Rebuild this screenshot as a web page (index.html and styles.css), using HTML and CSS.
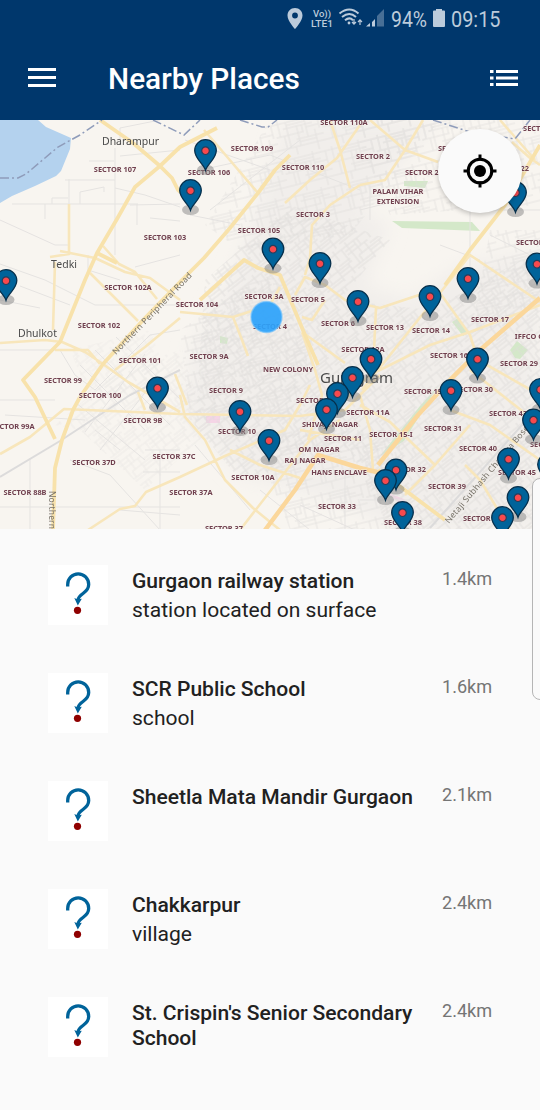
FILE: index.html
```html
<!DOCTYPE html>
<html lang="en">
<head>
<meta charset="utf-8">
<title>Nearby Places</title>
<link rel="stylesheet" href="styles.css">
</head>
<body>
<header class="header">
  <svg class="status" viewBox="0 0 540 38" aria-label="Status bar">
    <path fill-rule="evenodd" d="M295 8c-4.400 0-7.500 3.300-7.500 7.500 0 5.500 7.500 13.500 7.500 13.500s7.500-8 7.500-13.500c0-4.200-3.100-7.500-7.500-7.500zm0 4.600a2.900 2.900 0 1 1 0 5.800 2.900 2.900 0 0 1 0-5.800z"/>
    <text class="volte" x="313" y="17" textLength="18" lengthAdjust="spacingAndGlyphs">Vo))</text>
    <text class="volte" x="311" y="27" textLength="22" lengthAdjust="spacingAndGlyphs">LTE1</text>
    <g class="wave"><path d="M339.500 13.500q10-8 19 0M342 17q7.500-6 14 0M345 20.200q4.500-3.700 8 0"/><path d="M354 19v5m-2-2l2 2.200 2-2.200M360 25v-5m-2 2l2-2.200 2 2.200" stroke-width="1.200"/></g>
    <circle cx="349" cy="23" r="1.400"/>
    <path d="M366 26.500l4-3.500v3.500zM372 22l3-3v7.500h-3z"/><path opacity=".38" d="M377 16l7-7v17.500h-7z"/>
    <text class="digits" x="391" y="27" textLength="36" lengthAdjust="spacingAndGlyphs">94%</text>
    <path d="M433 11.500q0-1 1-1h2v-1.500h6v1.500h2q1 0 1 1v14.500q0 1-1 1h-10q-1 0-1-1z"/>
    <text class="digits" x="451" y="27" textLength="49.500" lengthAdjust="spacingAndGlyphs">09:15</text>
  </svg>
  <div class="toolbar">
    <svg class="menu" viewBox="0 0 28 20"><path d="M0 0h28v3H0zM0 8h28v3H0zM0 16h28v3H0z"/></svg>
    <h1 class="title">Nearby Places</h1>
    <svg class="listicon" viewBox="0 0 28 16"><path d="M0 0h3.500v3H0zM6 0h22v3H6zM0 6.500h3.500v3H0zM6 6.500h22v3H6zM0 13h3.500v3H0zM6 13h22v3H6z"/></svg>
  </div>
</header>

<main>
<section class="map">
<svg class="mapsvg" viewBox="0 120 540 410">
  <defs>
    <pattern id="blocks" width="39" height="31" patternUnits="userSpaceOnUse" patternTransform="rotate(-38)">
      <path d="M0 4h39M0 12h25M9 19h30M0 26h39M5 0v26M13 4v15M21 12v19M29 0v12M34 19v12M17 4v8M9 19v7M0 8h13M21 22h13M25 16h14M0 29h21M37 4v15"/>
    </pattern>
    <pattern id="grid" width="47" height="37" patternUnits="userSpaceOnUse" patternTransform="rotate(-14)">
      <path d="M0 3h47M8 9h30M0 16h28M19 22h28M0 29h47M4 0v16M12 3v26M22 9v20M31 0v22M39 16v21M44 3v13M17 29v8M12 6h19M22 25h17M31 12h13M8 16v13M27 9v7"/>
    </pattern>
    <filter id="soft" x="-10%" y="-10%" width="120%" height="120%"><feGaussianBlur stdDeviation="9"/></filter>
    <g id="pin">
      <ellipse class="shade" cx="0" cy="19" rx="8.500" ry="5.300"/>
      <path class="pinbody" d="M0 19.500C-2 13-10.800 8-10.800-.2a10.800 10.800 0 0 1 21.600 0C10.800 8 2 13 0 19.500z"/>
      <circle class="pindot" r="3.800"/>
    </g>
  </defs>
  <rect class="land" y="120" width="540" height="410"/>
  <path class="lake" d="M0 120H38L46 127 71 138 70 149 61 171 56 176 35 186 12 196 0 203z"/>
  <path class="urban" filter="url(#soft)" d="M285 120H438L360 210 390 225 365 285 410 300 460 265 540 250V530H400L330 500 240 475 185 415 190 350 235 270z"/>
  <path class="park" d="M392 221l80 1 8 9-78-3zM404 181h24l-3 7-21-2zM452 322l6-4 10 15-5 3zM510 350l7-9 11 9-8 9-5-1zM380 456l40-50 18-20-34 55zM220 336l8 2-1 6-7-1z"/>
  <path class="pink" d="M206 416h14v7h-14zM388 493l16 6 12 14-10-3z"/>
  <g fill="url(#grid)" opacity=".65">
    <path d="M270 120H440L350 235 240 250 205 225zM180 330L270 270 310 350 290 420 190 420z"/>
    <path d="M350 120H540V205L390 215zM490 230H540V300L470 340zM250 430H400V530H290z"/>
  </g>
  <g fill="url(#blocks)" opacity=".75">
    <path d="M205 280L290 205 390 240 340 300 430 310 540 250V530H390L350 450 240 480 195 425z"/>
    <path d="M55 425L120 370 180 350 210 430 145 490 80 430z" opacity=".5"/>
    <path d="M70 350L150 330 165 370 95 410z" opacity=".4"/>
  </g>
  <g class="lanes">
    <path d="M12 204H138M65 180H115V148M69 179V204M115 180V255M89 161H114M115 188L145 195 180 207M45 204V219M52 204V198H68M80 204V192L104 187V192M137 204V225M0 220L55 245H69M120 145V128L160 120M120 156L180 150M130 205L180 204M150 218L180 221M147 238H180M0 264L45 280 95 305H180M88 255V270L120 280M135 267L180 255M20 286L70 305M0 350H60L75 375 95 390 150 335 180 330M0 300L40 308M5 415L85 420M95 430L120 450M30 458V530M0 507H180M70 460L110 475 160 530M145 450H180M143 472H180M120 510L180 515M160 450V530M185 140L270 170M190 215L240 225M200 170L270 155 360 190M210 210L300 140M195 445L250 510M260 490L310 530M345 470V530M360 500H410M300 505L355 530M470 190V285M490 235L540 260M480 210H540M440 245L480 260M360 210L420 195M370 185V220M0 400H55M80 365L145 430M95 350L170 425M116 337L183 402M75 402L145 460M100 450L155 380M85 432L145 354"/>
  </g>
  <path class="rail" d="M0 477L60 441 130 395 180 370M540 405L430 528"/>
  <g class="road thin">
    <path d="M69 204V254L50 257M103 246L119 264 135 272 157 299M60 251L95 258 125 272 150 278 180 300M55 262L53 330M0 343L45 340 62 342 85 352 103 364 128 382 180 412M55 350H88L100 364M180 318L145 347 115 370M204 130L217 145 258 193M330 120L340 150 350 188M360 125L337 158 310 180 285 203M360 185L330 205 312 225 310 258 305 275M370 120L405 150 438 162M405 150L423 120M405 150L385 180 360 185M512 142L530 158 540 165M180 312L233 317 270 305 280 287M233 317L242 340 248 356M295 295L305 277 325 285 345 300 380 308 425 293 440 293 470 255 540 302M302 317L312 320 325 300M302 332L345 363M302 332L315 370 322 395 308 440M440 293L470 335 478 360 540 395M362 390L430 305M376 308L374 350M0 454L30 437 64 409 180 414 300 416 345 410 380 375M88 530L120 509 135 506 146 492 180 477 225 456 285 430 300 405 310 385M180 395L185 417 205 440 225 480 253 508 280 530M240 530L310 440 340 420M230 450L260 465 300 478M300 430L360 440M360 395L370 430 373 470M360 405L390 422 435 465 405 495M435 465L470 425M450 410L490 425 540 460M465 465L480 480 510 530M175 374L187 405M138 392L145 410M470 370L540 425M500 120L535 160M345 400L370 375 430 345 470 332 540 305M90 273L138 321"/>
  </g>
  <g class="road">
    <path d="M100 120L133 143 160 166 172 178 178 190 190 200M217 128L180 147 160 166 135 187 117 219 97 253 85 280 60 342 23 380 35 397 55 439M290 155L275 170 258 193 230 228 204 258 180 282 145 318 103 364 80 397 73 410 62 440 55 468 53 530M200 300L244 260 258 268 280 275 305 335 318 365M540 145L505 205 470 250 445 285M378 470L445 520M97 253L117 263"/>
  </g>
  <path class="highway" d="M540 298L480 350 450 380 418 415 378 465M385 474L360 468 318 455 295 490 265 530"/>
  <path class="border" d="M0 178H18L26 174 58 147 80 135 102 120M153 120L184 135 200 120M240 120L262 127 268 127 277 120M433 120L470 132 515 139 530 120"/>

  <g class="place">
    <text x="102" y="145" textLength="57">Dharampur</text><text x="51" y="268" textLength="26">Tedki</text><text x="18" y="337" textLength="39">Dhulkot</text>
    <text class="city" x="320" y="383" textLength="73">Gurugram</text>
  </g>
  <g class="street">
    <text transform="translate(116 355) rotate(-46)" textLength="110">Northern Peripheral Road</text>
    <text transform="translate(49 491) rotate(90)" textLength="38">Northern</text>
    <text transform="translate(449 524) rotate(-50)" textLength="125">Netaji Subhash Chandra Bose</text>
  </g>
  <g class="sector">
    <text x="344" y="125">SECTOR 110A</text><text x="252" y="151">SECTOR 109</text><text x="115" y="172">SECTOR 107</text><text x="209" y="175">SECTOR 106</text><text x="303" y="170">SECTOR 110</text><text x="373" y="159">SECTOR 2</text><text x="424" y="175">SECTOR 23</text><text x="457" y="151">SECTOR 21</text><text x="537" y="131">SECTOR</text><text x="510" y="171">SECTOR 22</text>
    <text x="398" y="194">PALAM VIHAR</text><text x="398" y="204">EXTENSION</text><text x="313" y="217">SECTOR 3</text><text x="259" y="233">SECTOR 105</text><text x="165" y="240">SECTOR 103</text><text x="535" y="245">SECTOR 18</text>
    <text x="128" y="290">SECTOR 102A</text><text x="99" y="328">SECTOR 102</text><text x="197" y="307">SECTOR 104</text><text x="264" y="299">SECTOR 3A</text><text x="308" y="302">SECTOR 5</text><text x="270" y="329">SECTOR 4</text><text x="338" y="326">SECTOR 6</text><text x="385" y="330">SECTOR 13</text><text x="431" y="333">SECTOR 14</text><text x="490" y="322">SECTOR 17</text><text x="539" y="339">IFFCO Chowk</text>
    <text x="140" y="363">SECTOR 101</text><text x="63" y="383">SECTOR 99</text><text x="100" y="398">SECTOR 100</text><text x="209" y="359">SECTOR 9A</text><text x="288" y="372">NEW COLONY</text><text x="363" y="352">SECTOR 12A</text><text x="449" y="358">SECTOR 16</text><text x="519" y="366">SECTOR 29</text><text x="226" y="393">SECTOR 9</text><text x="423" y="394">SECTOR 15</text><text x="474" y="392">SECTOR 30</text>
    <text x="13" y="429">SECTOR 99A</text><text x="143" y="423">SECTOR 9B</text><text x="237" y="434">SECTOR 10</text><text x="313" y="403">SECTOR 7</text><text x="368" y="415">SECTOR 11A</text><text x="330" y="427">SHIVAJI NAGAR</text><text x="343" y="441">SECTOR 11</text><text x="391" y="437">SECTOR 15-I</text><text x="443" y="431">SECTOR 31</text><text x="508" y="416">SECTOR 43</text>
    <text x="319" y="452">OM NAGAR</text><text x="305" y="463">RAJ NAGAR</text><text x="339" y="475">HANS ENCLAVE</text><text x="478" y="451">SECTOR 40</text><text x="549" y="447">SECTOR 44</text><text x="407" y="472">SECTOR 32</text><text x="517" y="475">SECTOR 45</text><text x="447" y="489">SECTOR 39</text>
    <text x="94" y="465">SECTOR 37D</text><text x="174" y="459">SECTOR 37C</text><text x="253" y="480">SECTOR 10A</text><text x="191" y="495">SECTOR 37A</text><text x="25" y="495">SECTOR 88B</text><text x="337" y="509">SECTOR 33</text><text x="403" y="525">SECTOR 38</text><text x="482" y="521">SECTOR 46</text><text x="224" y="531">SECTOR 37</text>
  </g>
  <circle class="here" cx="266.500" cy="317" r="15.500"/>
  <g transform="translate(.5 .7)">
  <use href="#pin" x="205" y="150"/><use href="#pin" x="190" y="190"/><use href="#pin" x="515" y="192"/><use href="#pin" x="272.500" y="248.500"/><use href="#pin" x="319.500" y="263"/><use href="#pin" x="536.500" y="263.500"/><use href="#pin" x="467.500" y="278"/><use href="#pin" x="5.500" y="280"/><use href="#pin" x="429.500" y="296"/><use href="#pin" x="357.500" y="301"/><use href="#pin" x="370.500" y="358.500"/><use href="#pin" x="477" y="358.500"/><use href="#pin" x="352" y="377"/><use href="#pin" x="157" y="387.500"/><use href="#pin" x="540" y="389"/><use href="#pin" x="450.500" y="390"/><use href="#pin" x="337" y="393"/><use href="#pin" x="326" y="409"/><use href="#pin" x="239.500" y="411"/><use href="#pin" x="533" y="419.500"/><use href="#pin" x="268.500" y="440"/><use href="#pin" x="508" y="458.500"/><use href="#pin" x="548" y="464"/><use href="#pin" x="395.500" y="469.500"/><use href="#pin" x="385" y="480"/><use href="#pin" x="517.500" y="497"/><use href="#pin" x="402" y="512"/><use href="#pin" x="502" y="517"/>
  </g>
</svg>
<button class="locate" aria-label="My location"><svg viewBox="0 0 34 34"><circle cx="17" cy="17" r="11.800" fill="none" stroke="#000" stroke-width="3"/><circle cx="17" cy="17" r="6"/><path d="M15.500 .5h3v6h-3zM15.500 27.500h3v6h-3zM.5 15.500h6v3h-6zM27.500 15.500h6v3h-6z"/></svg></button>
</section>

<svg class="symbols"><defs><g id="unknown">
  <path d="M19.700 21.500V19.500A10.500 10.700 0 0 1 40.700 19.500C40.700 28.500 31 28 29.900 35" fill="none" stroke="#00639a" stroke-width="3.300"/>
  <path d="M26.300 33l3.500 1.600 4-.8-4 6.700z" fill="#00639a"/><circle cx="29.500" cy="45.300" r="3.600" fill="#8f0000"/>
</g></defs></svg>
<ul class="places">
  <li class="item"><svg class="thumb" viewBox="0 0 60 60"><use href="#unknown"/></svg><div class="info"><h2 class="name">Gurgaon railway station</h2><p class="kind">station located on surface</p></div><span class="dist">1.4km</span></li>
  <li class="item"><svg class="thumb" viewBox="0 0 60 60"><use href="#unknown"/></svg><div class="info"><h2 class="name">SCR Public School</h2><p class="kind">school</p></div><span class="dist">1.6km</span></li>
  <li class="item"><svg class="thumb" viewBox="0 0 60 60"><use href="#unknown"/></svg><div class="info"><h2 class="name">Sheetla Mata Mandir Gurgaon</h2></div><span class="dist">2.1km</span></li>
  <li class="item"><svg class="thumb" viewBox="0 0 60 60"><use href="#unknown"/></svg><div class="info"><h2 class="name">Chakkarpur</h2><p class="kind">village</p></div><span class="dist">2.4km</span></li>
  <li class="item"><svg class="thumb" viewBox="0 0 60 60"><use href="#unknown"/></svg><div class="info"><h2 class="name">St. Crispin's Senior Secondary School</h2></div><span class="dist">2.4km</span></li>
</ul>
</main>
<div class="edge"></div>
</body>
</html>
```
FILE: styles.css
```css
* { box-sizing: border-box; }
html, body { margin: 0; overflow: hidden; }
body { position: relative; height: 1110px; background: #fafafa; color: #212121; font-family: Roboto, sans-serif; }
.header { height: 120px; background: #00376c; color: #fff; }
.status { display: block; width: 540px; height: 38px; fill: #bccbdb; }
.volte { font: 500 9.500px Roboto, sans-serif; }
.digits { font: 400 22px Roboto, sans-serif; }
.wave { fill: none; stroke: #bccbdb; stroke-width: 2; }
.toolbar { display: flex; align-items: center; height: 82px; padding: 0 22px 0 28px; }
.menu { width: 28px; height: 20px; margin-bottom: 2px; fill: #fff; }
.title { flex: 1; margin: 0 0 0 52px; font-size: 29.800px; line-height: 36px; font-weight: 500; }
.listicon { width: 28px; height: 16px; margin-bottom: 2px; fill: #fff; }
.map { position: relative; height: 409px; overflow: hidden; }
.mapsvg { display: block; width: 540px; height: 410px; }
.land { fill: #f8f5f0; }
.urban { fill: #f1eeeb; }
.lake { fill: #b4d2ee; }
.park { fill: #d4e8c9; }
.pink { fill: #f5d5e6; }
pattern path, .lanes { fill: none; stroke: #dedcda; stroke-width: 1; }
.lanes { stroke: #e5e3e1; }
.rail { fill: none; stroke: #dcdbdb; stroke-width: 2; }
.road { fill: none; stroke: #f8e2ab; stroke-width: 3.800; stroke-linejoin: round; }
.thin { stroke-width: 2.600; stroke: #f8e6bb; }
.highway { fill: none; stroke: #fbd79b; stroke-width: 4.500; stroke-linejoin: round; }
.border { fill: none; stroke: #8f9cba; stroke-width: 1.500; stroke-dasharray: 9 3 2 3; }
.place { fill: #4b4b4b; font: 10.500px "Noto Sans", sans-serif; }
.city { font-size: 15px; }
.street { fill: #777268; font: 8.500px "Noto Sans", sans-serif; }
.sector { fill: #70404f; stroke: #f8f5f0; stroke-opacity: .7; stroke-width: 1; paint-order: stroke; font: 700 7.400px "Noto Sans", sans-serif; text-anchor: middle; }
.here { fill: #2da2fb; fill-opacity: .93; stroke: #78c3fb; stroke-opacity: .65; stroke-width: 1.500; }
.shade { fill: #858585; fill-opacity: .5; }
.pinbody { fill: #00639a; stroke: #07304c; stroke-width: 1.300; }
.pindot { fill: #f8494d; stroke: #273d5b; stroke-width: 1.200; }
.locate { position: absolute; top: 9px; right: 18px; display: flex; align-items: center; justify-content: center; width: 84px; height: 84px; padding: 0; border: 0; border-radius: 50%; background: #fafafa; box-shadow: 0 2px 5px rgba(0, 0, 0, .22); }
.locate svg { width: 34px; height: 34px; }
.symbols { display: block; width: 0; height: 0; }
.places { display: flex; flex-direction: column; gap: 48px; margin: 0; padding: 36px 48px 0; list-style: none; }
.item { display: flex; align-items: flex-start; height: 60px; }
.thumb { flex: none; width: 60px; height: 60px; background: #fff; }
.info { flex: 1; padding: 3px 0 0 24px; margin-right: -24px; }
.name { margin: 0; font-size: 21.050px; line-height: 25px; font-weight: 500; }
.kind { margin: 4px 0 0; font-size: 21.050px; line-height: 25px; }
.dist { flex: none; width: 50px; margin-left: 24px; padding-top: 3px; font-size: 18.100px; line-height: 22px; color: #757575; }
.edge { position: absolute; top: 478px; right: -8px; width: 16px; height: 222px; border: 1px solid #b5b5b5; border-radius: 8px; background: #fafafa; }
```
